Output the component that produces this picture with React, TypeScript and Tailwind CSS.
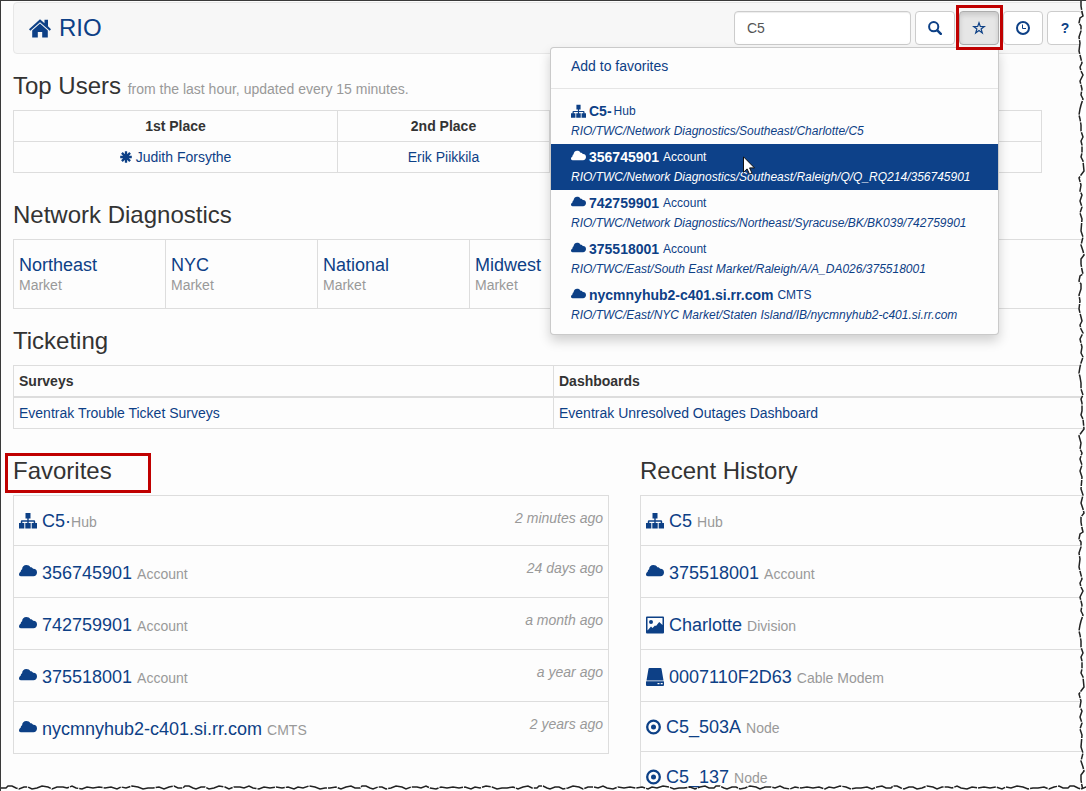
import React from "react";

type IconKind = "hub" | "cloud" | "picture" | "modem" | "node";

interface Item {
  icon: IconKind;
  name: string;
  kind: string;
  path?: string;
  when?: string;
}

const menuItems: Item[] = [
  { icon: "hub", name: "C5-", kind: "Hub", path: "RIO/TWC/Network Diagnostics/Southeast/Charlotte/C5" },
  { icon: "cloud", name: "356745901", kind: "Account", path: "RIO/TWC/Network Diagnostics/Southeast/Raleigh/Q/Q_RQ214/356745901" },
  { icon: "cloud", name: "742759901", kind: "Account", path: "RIO/TWC/Network Diagnostics/Northeast/Syracuse/BK/BK039/742759901" },
  { icon: "cloud", name: "375518001", kind: "Account", path: "RIO/TWC/East/South East Market/Raleigh/A/A_DA026/375518001" },
  { icon: "cloud", name: "nycmnyhub2-c401.si.rr.com", kind: "CMTS", path: "RIO/TWC/East/NYC Market/Staten Island/IB/nycmnyhub2-c401.si.rr.com" },
];

const favorites: Item[] = [
  { icon: "hub", name: "C5·", kind: "Hub", when: "2 minutes ago" },
  { icon: "cloud", name: "356745901", kind: "Account", when: "24 days ago" },
  { icon: "cloud", name: "742759901", kind: "Account", when: "a month ago" },
  { icon: "cloud", name: "375518001", kind: "Account", when: "a year ago" },
  { icon: "cloud", name: "nycmnyhub2-c401.si.rr.com", kind: "CMTS", when: "2 years ago" },
];

const history: Item[] = [
  { icon: "hub", name: "C5", kind: "Hub" },
  { icon: "cloud", name: "375518001", kind: "Account" },
  { icon: "picture", name: "Charlotte", kind: "Division" },
  { icon: "modem", name: "0007110F2D63", kind: "Cable Modem" },
  { icon: "node", name: "C5_503A", kind: "Node" },
  { icon: "node", name: "C5_137", kind: "Node" },
];

const markets = ["Northeast", "NYC", "National", "Midwest"];

function ItemIcon({ kind, className }: { kind: IconKind; className: string }) {
  if (kind === "node") {
    return (
      <svg viewBox="0 0 15 18" className={className} fill="none" aria-hidden="true">
        <circle cx="7.5" cy="9" r="6.3" stroke="currentColor" strokeWidth="2.3" />
        <circle cx="7.5" cy="9" r="2.5" fill="currentColor" />
      </svg>
    );
  }
  return (
    <svg viewBox="0 0 18 18" className={className} fill="currentColor" aria-hidden="true">
      {kind === "hub" && (
        <path d="M6.500 1h5v5.500H9.700V8.300h5.300a1.200 1.200 0 0 1 1.200 1.200V11H18v5.500h-5.300V11h2V9.700H9.700V11h2v5.500H6.300V11h2V9.700H3.300V11h2v5.500H0V11h1.800V9.500A1.200 1.200 0 0 1 3 8.300h5.300V6.500H6.500z" />
      )}
      {kind === "cloud" && (
        <path d="M1.800 12.200C.7 12.200 0 11.600 0 10.500 0 9.200.6 8.300 1.700 7.700 1.700 6.500 2.200 5.700 3.100 5.200 3.100 2.900 4.900 1 7.300 1c1.900 0 3.300.8 4.100 2.200 1.200-.1 2.200.5 2.700 1.600 2.300-.2 3.900 1.200 3.900 3.600 0 2.300-1.500 3.800-3.600 3.800z" />
      )}
      {kind === "picture" && (
        <path
          fillRule="evenodd"
          d="M1 .5h16a1 1 0 0 1 1 1v15a1 1 0 0 1-1 1H1a1 1 0 0 1-1-1v-15a1 1 0 0 1 1-1zM1.500 2v12.500l3.500-4 1.500 1.500 2.500-2.500 1 .5 3.200-4 3.300 3V2zM5 4a2 2 0 1 1 0 4 2 2 0 0 1 0-4z"
        />
      )}
      {kind === "modem" && (
        <path
          fillRule="evenodd"
          d="M3.500 0h11a1 1 0 0 1 1 .8L17.500 12.600H.5L2.500.8a1 1 0 0 1 1-.8zM.5 13.200h17a.5.5 0 0 1 .5.5V17a1 1 0 0 1-1 1H1a1 1 0 0 1-1-1v-3.300a.5.5 0 0 1 .5-.5zM11.500 15v1.200h2V15zM14.700 15v1.200h2V15z"
        />
      )}
    </svg>
  );
}

function HomeIcon() {
  return (
    <svg viewBox="0 0 22 19" className="h-[19px] w-[22px]" fill="currentColor" aria-hidden="true">
      <path d="M11 .3 15.500 4.200V.8H19v6.500l3 2.900-1.300 1.500L11 3.200 1.300 11.700 0 10.200z" />
      <path d="M11 4.600 18.800 11.400V18.600H13.200V13H8.800V18.600H3.200V11.400z" />
    </svg>
  );
}

function SearchIcon() {
  return (
    <svg viewBox="0 0 14 14" className="h-3.5 w-3.5" fill="none" stroke="currentColor" aria-hidden="true">
      <circle cx="5.700" cy="5.700" r="4.600" strokeWidth="2" />
      <path d="M9.300 9.300l3.500 3.500" strokeWidth="2.500" strokeLinecap="round" />
    </svg>
  );
}

function StarIcon() {
  return (
    <svg viewBox="0 0 14 14" className="h-3.5 w-3.5" fill="none" stroke="currentColor" aria-hidden="true">
      <path d="M7 1.800l1.300 3.700 4 .1-3.200 2.400 1.200 3.900L7 9.600l-3.300 2.300 1.200-3.900L1.700 5.600l4-.1z" strokeWidth="1.200" />
    </svg>
  );
}

function ClockIcon() {
  return (
    <svg viewBox="0 0 14 14" className="h-3.5 w-3.5" fill="none" stroke="currentColor" aria-hidden="true">
      <circle cx="7" cy="7" r="6" strokeWidth="2" />
      <path d="M6.500 3.500v4H10" strokeWidth="1" />
    </svg>
  );
}

function AsteriskIcon() {
  return (
    <svg viewBox="0 0 12 12" className="h-3 w-3" stroke="currentColor" strokeWidth="2.300" aria-hidden="true">
      <path d="M6 .2v11.600M.2 6h11.600M1.900 1.900l8.200 8.200M10.100 1.900l-8.200 8.200" />
    </svg>
  );
}

/* Torn paper outline: [distance along the edge, distance across it] */
const sideTear = [
  [0, 3], [5, 3], [11, 4], [15, 5], [17, 2], [22, 1], [25, 3], [30, 3], [36, 1], [42, 2], [50, 1], [54, 2], [62, 4],
  [66, 2], [70, 3], [74, 5], [80, 2], [88, 4], [94, 3], [98, 5], [104, 3], [108, 2], [114, 1], [118, 2], [124, 3],
  [130, 3], [136, 5], [140, 3], [144, 4], [152, 4], [156, 3], [160, 5], [170, 6], [174, 3], [177, 1], [184, 3],
  [190, 2], [194, 4], [200, 2], [206, 4], [212, 2], [218, 4], [230, 3], [236, 5], [244, 3], [250, 5], [254, 6],
];
const bottomTear = [
  [0, 4], [5, 4], [7, 2], [11, 2], [15, 4], [18, 5], [23, 3], [27, 3], [31, 5], [36, 4], [41, 2], [47, 3], [51, 5],
  [56, 3], [62, 3], [66, 4], [71, 2], [75, 4], [81, 5], [86, 3], [92, 4], [98, 3], [104, 4], [110, 3], [116, 5],
  [120, 3], [125, 4], [131, 2], [137, 3], [142, 5], [147, 4], [152, 4], [158, 3], [163, 5], [168, 3], [173, 2],
];

function repeatTear(points: number[][], period: number, times: number, vertical: boolean) {
  const out: string[] = [];
  for (let i = 0; i < times; i++) {
    points.forEach(([along, across]) => {
      const a = along + i * period;
      out.push(vertical ? `${across} ${a}` : `${a} ${across}`);
    });
  }
  return out.join("L");
}

const sidePath = repeatTear(sideTear, 258, 12, true);
const bottomPath = repeatTear(bottomTear, 177, 24, false);

function Heading({ children }: { children: React.ReactNode }) {
  return <h3 className="mb-3 text-2xl leading-6 text-[#333]">{children}</h3>;
}

function ItemList({ items, openRight }: { items: Item[]; openRight?: boolean }) {
  return (
    <ul className={openRight ? "border-t border-l border-[#ddd]" : "border-x border-t border-[#ddd]"}>
      {items.map((item) => {
        const short = item.icon === "hub" || item.icon === "node";
        return (
          <li
            key={item.name}
            className={
              short
                ? "flex h-[50px] items-start justify-between border-b border-[#ddd] px-[5px] pt-[13px]"
                : "flex h-[52px] items-start justify-between border-b border-[#ddd] px-[5px] pt-[15px]"
            }
          >
            <a href="#" className="flex items-center gap-[5px] text-lg leading-6 text-[#0d4086]">
              <ItemIcon
                kind={item.icon}
                className={item.icon === "node" ? "h-[18px] w-[15px] shrink-0" : "h-[18px] w-[18px] shrink-0"}
              />
              <span>
                {item.name}
                <small className={item.name.endsWith("·") ? "text-sm leading-5 text-[#999]" : "ml-[5px] text-sm leading-5 text-[#999]"}>
                  {item.kind}
                </small>
              </span>
            </a>
            {item.when && (
              <em className={short ? "-mt-px text-sm leading-5 text-[#999]" : "-mt-[3px] text-sm leading-5 text-[#999]"}>
                {item.when}
              </em>
            )}
          </li>
        );
      })}
    </ul>
  );
}

function FavoritesMenu() {
  return (
    <div className="absolute top-full right-0 z-10 mt-0.5 w-[449px] rounded border border-black/20 bg-[#fdfdfd] pt-[5px] pb-1.5 shadow-[0_6px_12px_rgba(0,0,0,0.18)]">
      <a href="#" className="block px-5 py-[3px] text-sm leading-5 text-[#0d4086]">
        Add to favorites
      </a>
      <div className="my-[9px] h-px bg-[#e5e5e5]" />
      <ul>
        {menuItems.map((item, i) => (
          <li key={item.name} className="relative">
            <a
              href="#"
              className={
                i === 1
                  ? "block bg-[#0d4189] px-5 py-[3px] text-white"
                  : "block px-5 py-[3px] text-[#0d4086]"
              }
            >
              <span className="flex h-5 items-center text-sm leading-5">
                <ItemIcon kind={item.icon} className="mr-[3px] h-[15px] w-[15px] shrink-0" />
                <b>{item.name}</b>
                <small className={i === 0 ? "ml-0.5 text-xs leading-5" : "ml-1 text-xs leading-5"}>{item.kind}</small>
              </span>
              <em className="block text-xs leading-5 whitespace-nowrap">{item.path}</em>
            </a>
            {i === 1 && (
              <svg viewBox="0 0 12 19" className="absolute top-3 left-48 h-[19px] w-3" aria-hidden="true">
                <path
                  d="M.5.800v15.500l3.600-3.400 2.400 5.300 2.500-1.100-2.400-5.200h4.900z"
                  fill="#fff"
                  stroke="#111"
                  strokeWidth="1"
                />
              </svg>
            )}
          </li>
        ))}
      </ul>
    </div>
  );
}

const toolButton =
  "flex h-[34px] w-10 items-center justify-center rounded border border-[#ccc] bg-white text-[#0d4086]";

export default function App() {
  return (
    <div className="relative h-screen overflow-hidden border-t border-l border-[#3a3a3a] bg-[#fdfdfd] pl-3 font-['Liberation_Sans',Arial,sans-serif] text-sm leading-5 text-[#333]">
      <header className="mt-px mb-5 flex h-[52px] items-center justify-between rounded border border-[#e7e7e7] bg-[#f7f7f7] pr-0.5 pl-[15px]">
        <a href="#" className="flex items-center gap-2 text-2xl leading-8 text-[#0d4086]">
          <HomeIcon />
          <span>RIO</span>
        </a>
        <form className="flex gap-1" onSubmit={(e) => e.preventDefault()}>
          <input
            type="text"
            aria-label="Search"
            defaultValue="C5"
            className="h-[34px] w-[177px] rounded border border-[#ccc] bg-white px-3 text-sm text-[#555] shadow-[inset_0_1px_1px_rgba(0,0,0,0.075)]"
          />
          <button type="submit" aria-label="Search" className={toolButton}>
            <SearchIcon />
          </button>
          <div className="relative">
            <button
              type="button"
              aria-label="Favorites"
              className="flex h-[34px] w-10 items-center justify-center rounded border border-[#adadad] bg-[#e6e6e6] text-[#0d4086] shadow-[inset_0_3px_5px_rgba(0,0,0,0.125)]"
            >
              <StarIcon />
            </button>
            <FavoritesMenu />
            <div className="pointer-events-none absolute -top-1.5 -right-1 -bottom-[5px] -left-[3px] z-20 border-3 border-[#c00000]" />
          </div>
          <button type="button" aria-label="Recent history" className={toolButton}>
            <ClockIcon />
          </button>
          <button
            type="button"
            aria-label="Help"
            className="h-[34px] w-9 rounded border border-[#ccc] bg-white text-sm font-bold text-[#0d4086]"
          >
            ?
          </button>
        </form>
      </header>

      <section className="mb-[30px]">
        <Heading>
          Top Users <small className="text-sm leading-none text-[#999]">from the last hour, updated every 15 minutes.</small>
        </Heading>
        <div className="pr-11">
          <table className="w-full table-fixed border-collapse text-center">
            <colgroup>
              <col className="w-[324px]" />
              <col className="w-[212px]" />
              <col />
            </colgroup>
            <thead>
              <tr>
                <th className="border border-[#ddd] p-[5px]">1st Place</th>
                <th className="border border-[#ddd] p-[5px]">2nd Place</th>
                <td className="border border-[#ddd] p-[5px]" />
              </tr>
            </thead>
            <tbody>
              <tr>
                <td className="border border-[#ddd] p-[5px]">
                  <a href="#" className="flex items-center justify-center gap-1 text-[#0d4086]">
                    <AsteriskIcon />
                    Judith Forsythe
                  </a>
                </td>
                <td className="border border-[#ddd] p-[5px]">
                  <a href="#" className="text-[#0d4086]">Erik Piikkila</a>
                </td>
                <td className="border border-[#ddd] p-[5px]" />
              </tr>
            </tbody>
          </table>
        </div>
      </section>

      <section className="mb-5">
        <Heading>Network Diagnostics</Heading>
        <div className="flex h-[70px] border-y border-l border-[#ddd]">
          {markets.map((m) => (
            <div key={m} className="w-[152px] shrink-0 border-r border-[#ddd] px-[5px] pt-[15px]">
              <a href="#" className="block text-lg leading-5 text-[#0d4086]">{m}</a>
              <span className="block text-[#999]">Market</span>
            </div>
          ))}
        </div>
      </section>

      <section className="mb-[30px]">
        <Heading>Ticketing</Heading>
        <table className="w-full table-fixed border-separate border-spacing-0 border-t border-l border-[#ddd] text-left">
          <colgroup>
            <col className="w-[540px]" />
            <col />
          </colgroup>
          <thead>
            <tr>
              <th className="border-r border-b-2 border-[#ddd] p-[5px]">Surveys</th>
              <th className="border-b-2 border-[#ddd] p-[5px]">Dashboards</th>
            </tr>
          </thead>
          <tbody>
            <tr>
              <td className="border-r border-b border-[#ddd] p-[5px]">
                <a href="#" className="text-[#0d4086]">Eventrak Trouble Ticket Surveys</a>
              </td>
              <td className="border-b border-[#ddd] p-[5px]">
                <a href="#" className="text-[#0d4086]">Eventrak Unresolved Outages Dashboard</a>
              </td>
            </tr>
          </tbody>
        </table>
      </section>

      <div className="grid grid-cols-[minmax(0,596px)_minmax(0,1fr)] gap-x-[31px]">
        <section className="relative">
          <Heading>Favorites</Heading>
          <div className="pointer-events-none absolute -top-1.5 -left-2 h-10 w-[146px] border-3 border-[#c00000]" />
          <ItemList items={favorites} />
        </section>
        <section>
          <Heading>Recent History</Heading>
          <ItemList items={history} openRight />
        </section>
      </div>

      <svg className="absolute top-0 right-0 z-30 h-full w-2" fill="none" aria-hidden="true">
        <path d={`M8 0L${sidePath}L8 3100z`} fill="#fff" />
        <path d={`M${sidePath}`} stroke="#222" strokeWidth="1.500" strokeDasharray="9 1 14 1 6 1" />
      </svg>
      <svg className="absolute bottom-0 left-0 z-30 h-[7px] w-full" fill="none" aria-hidden="true">
        <path d={`M0 8L${bottomPath}L4300 8z`} fill="#fff" />
        <path d={`M${bottomPath}`} stroke="#222" strokeWidth="1.500" strokeDasharray="18 1 9 1 24 1" />
      </svg>
    </div>
  );
}
